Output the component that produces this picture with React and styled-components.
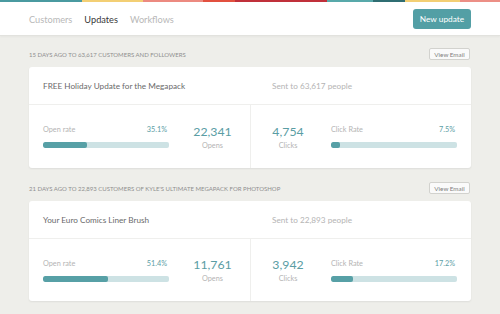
import React from "react";
import styled, { createGlobalStyle } from "styled-components";

const Global = createGlobalStyle`
  html, body { margin: 0; padding: 0; }
  body {
    background: #eeeeea;
    font-family: Lato, "Open Sans", "Liberation Sans", sans-serif;
    -webkit-font-smoothing: antialiased;
  }
`;

const Page = styled.div`
  width: 500px;
  min-height: 314px;
  background: #eeeeea;
`;

const Stripe = styled.div`
  display: flex;
  height: 2px;
`;

const StripeSeg = styled.div`
  flex: 0 0 ${(p) => p.$w}px;
  background: ${(p) => p.$c};
`;

const Header = styled.header`
  background: #fff;
  border-bottom: 1px solid #e2e2de;
  box-shadow: 0 1px 2px rgba(0,0,0,0.04);
`;

const HeaderInner = styled.div`
  height: 33px;
  display: flex;
  align-items: center;
  justify-content: space-between;
  padding: 0 29px;
`;

const Nav = styled.nav`
  display: flex;
  gap: 12px;
  padding-top: 1px;
`;

const NavItem = styled.span`
  font-size: 9.2px;
  color: ${(p) => (p.$active ? "#383838" : "#b8b8b8")};
`;

const PrimaryButton = styled.button`
  width: 58px;
  height: 20px;
  border: none;
  border-radius: 3px;
  background: #539fa5;
  color: #fff;
  font-family: inherit;
  font-size: 8.3px;
  padding: 0;
  cursor: pointer;
`;

const Main = styled.main`
  padding: 12px 29px 0;
  display: flex;
  flex-direction: column;
  gap: 14px;
`;

const Section = styled.section`
  display: flex;
  flex-direction: column;
  gap: 7px;
`;

const SectionHead = styled.div`
  display: flex;
  align-items: center;
  justify-content: space-between;
  height: 12px;
`;

const SectionLabel = styled.div`
  font-size: 6px;
  color: #8f8f8f;
  text-transform: uppercase;
`;

const GhostButton = styled.button`
  width: 41px;
  height: 12px;
  padding: 0;
  background: #fafafa;
  border: 1px solid #d2d2ce;
  border-radius: 2px;
  font-family: inherit;
  font-size: 6.3px;
  color: #808080;
  margin-right: 1px;
`;

const Card = styled.div`
  background: #fff;
  border-radius: 3px;
  box-shadow: 0 1px 2px rgba(0,0,0,0.07);
`;

const CardHead = styled.div`
  display: grid;
  grid-template-columns: 229px 1fr;
  align-items: center;
  height: 37px;
  padding-left: 14px;
  border-bottom: 1px solid #efefed;
`;

const Title = styled.div`
  font-size: 8.2px;
  color: #6a6a6a;
`;

const Sent = styled.div`
  font-size: 8.2px;
  color: #b4b4b4;
`;

const Stats = styled.div`
  display: grid;
  grid-template-columns: 221px 221px;
  height: ${(p) => p.$h}px;
`;

const Half = styled.div`
  display: flex;
  align-items: center;
  padding: ${(p) => (p.$right ? "0 14px 0 0" : "0 0 0 14px")};
  border-left: ${(p) => (p.$right ? "1px solid #efefed" : "none")};
`;

const RateBlock = styled.div`
  width: 126px;
  display: flex;
  flex-direction: column;
  gap: 7px;
`;

const RateRow = styled.div`
  display: flex;
  justify-content: space-between;
  align-items: baseline;
  padding-right: 2px;
  font-size: 7.3px;
  line-height: 10px;
`;

const RateLabel = styled.span`
  color: #b4b4b4;
`;

const RateValue = styled.span`
  color: #5c9ea5;
`;

const Track = styled.div`
  height: 6px;
  border-radius: 2px;
  background: #cde2e4;
  overflow: hidden;
`;

const Fill = styled.div`
  height: 100%;
  border-radius: 2px;
  background: #57a0a6;
`;

const Count = styled.div`
  flex: 1;
  display: flex;
  flex-direction: column;
  align-items: center;
  gap: 2px;
  padding: ${(p) => (p.$right ? "0 6px 0 0" : "0 0 0 6px")};
`;

const CountValue = styled.div`
  font-size: 12.3px;
  line-height: 15px;
  color: #5a9da4;
`;

const CountLabel = styled.div`
  font-size: 7.3px;
  color: #b4b4b4;
`;

const stripe = [
  [82, "#4a9aa0"],
  [61, "#f3cf74"],
  [60, "#ec8a80"],
  [32, "#e2503f"],
  [92, "#c0303a"],
  [46, "#58a9aa"],
  [32, "#2f6d72"],
  [55, "#f3cf74"],
  [40, "#ec8f86"],
];

const updates = [
  {
    label: "15 days ago to 63,617 customers and followers",
    title: "FREE Holiday Update for the Megapack",
    sent: "Sent to 63,617 people",
    openRate: 35.1,
    opens: "22,341",
    clicks: "4,754",
    clickRate: 7.5,
    h: 63,
  },
  {
    label: "21 days ago to 22,893 customers of Kyle's Ultimate Megapack for Photoshop",
    title: "Your Euro Comics Liner Brush",
    sent: "Sent to 22,893 people",
    openRate: 51.4,
    opens: "11,761",
    clicks: "3,942",
    clickRate: 17.2,
    h: 62,
  },
];

function Rate({ label, value }) {
  return (
    <RateBlock>
      <RateRow>
        <RateLabel>{label}</RateLabel>
        <RateValue>{value}%</RateValue>
      </RateRow>
      <Track>
        <Fill style={{ width: `${Math.max(value, 7)}%` }} />
      </Track>
    </RateBlock>
  );
}

export default function App() {
  return (
    <Page>
      <Global />
      <Header>
        <Stripe>
          {stripe.map(([w, c], i) => (
            <StripeSeg key={i} $w={w} $c={c} />
          ))}
        </Stripe>
        <HeaderInner>
          <Nav>
            <NavItem>Customers</NavItem>
            <NavItem $active>Updates</NavItem>
            <NavItem>Workflows</NavItem>
          </Nav>
          <PrimaryButton>New update</PrimaryButton>
        </HeaderInner>
      </Header>
      <Main>
        {updates.map((u, i) => (
          <Section key={i}>
            <SectionHead>
              <SectionLabel>{u.label}</SectionLabel>
              <GhostButton>View Email</GhostButton>
            </SectionHead>
            <Card>
              <CardHead>
                <Title>{u.title}</Title>
                <Sent>{u.sent}</Sent>
              </CardHead>
              <Stats $h={u.h}>
                <Half>
                  <Rate label="Open rate" value={u.openRate} />
                  <Count>
                    <CountValue>{u.opens}</CountValue>
                    <CountLabel>Opens</CountLabel>
                  </Count>
                </Half>
                <Half $right>
                  <Count $right>
                    <CountValue>{u.clicks}</CountValue>
                    <CountLabel>Clicks</CountLabel>
                  </Count>
                  <Rate label="Click Rate" value={u.clickRate} />
                </Half>
              </Stats>
            </Card>
          </Section>
        ))}
      </Main>
    </Page>
  );
}
